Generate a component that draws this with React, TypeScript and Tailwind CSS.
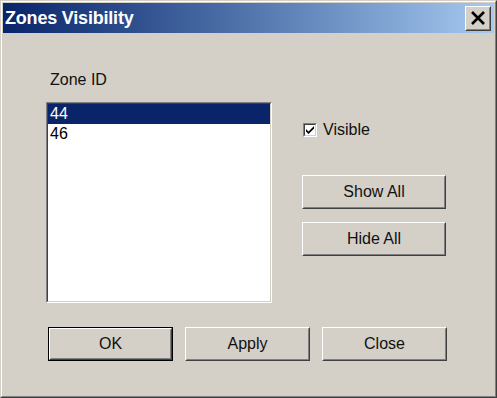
import React from "react";

const font = { fontFamily: '"Liberation Sans", Arial, sans-serif' };

function Button({ label, wide, isDefault }: { label: string; wide?: boolean; isDefault?: boolean }) {
  return (
    <div className={`${wide ? "w-[144px]" : "w-[125px]"} h-[34px] ${isDefault ? "border border-black" : ""}`}>
      <div className="w-full h-full border border-t-white border-l-white border-b-[#404040] border-r-[#404040]">
        <div className="w-full h-full flex items-center justify-center border border-t-[#d4d0c8] border-l-[#d4d0c8] border-b-[#808080] border-r-[#808080] text-[16px] text-[#111]">
          {label}
        </div>
      </div>
    </div>
  );
}

export default function App() {
  return (
    <div style={font} className="w-[497px] h-[398px] bg-[#d4d0c8] border border-t-[#d4d0c8] border-l-[#d4d0c8] border-b-[#404040] border-r-[#404040]">
      <div className="w-full h-full border border-t-white border-l-white border-b-[#808080] border-r-[#808080] p-px flex flex-col">
        {/* title bar */}
        <div className="h-[30px] flex items-center justify-between pl-[2px] pr-[3px] bg-gradient-to-r from-[#0a246a] to-[#a6caf0]">
          <span className="text-white font-bold text-[18px] tracking-[-0.2px]">Zones Visibility</span>
          <div className="w-[26px] h-[25px] border border-t-white border-l-white border-b-[#404040] border-r-[#404040] bg-[#d4d0c8]">
            <div className="w-full h-full flex items-center justify-center border border-t-[#d4d0c8] border-l-[#d4d0c8] border-b-[#808080] border-r-[#808080]">
              <svg width="16" height="14" viewBox="0 0 16 14">
                <path d="M2 1 L14 13 M14 1 L2 13" stroke="black" strokeWidth="2.6" />
              </svg>
            </div>
          </div>
        </div>

        {/* body */}
        <div className="flex-1 pl-[43px] pt-[38px]">
          <div className="flex">
            <div className="flex flex-col">
              <span className="text-[16px] text-[#111] leading-[18px] pl-[4px]">Zone ID</span>
              <div className="mt-[13px] w-[226px] h-[201px] border border-t-[#808080] border-l-[#808080] border-b-white border-r-white">
                <div className="w-full h-full bg-white border border-t-[#404040] border-l-[#404040] border-b-[#d4d0c8] border-r-[#d4d0c8] text-[16px]">
                  <div className="h-[20px] bg-[#0a246a] text-white pl-[2px] leading-[20px]">44</div>
                  <div className="h-[20px] text-black pl-[2px] leading-[20px]">46</div>
                </div>
              </div>
            </div>
            <div className="ml-[30px] pt-[47px] flex flex-col">
              <div className="flex items-center gap-[6px] pl-px">
                <div className="w-[14px] h-[14px] border border-t-[#808080] border-l-[#808080] border-b-white border-r-white">
                  <div className="w-full h-full bg-white border border-t-[#404040] border-l-[#404040] border-b-[#d4d0c8] border-r-[#d4d0c8] flex items-center justify-center">
                    <svg width="8" height="8" viewBox="0 0 8 8">
                      <path d="M0 3 L0 5.5 L2.5 8 L8 2.5 L8 0 L2.5 5.5 Z" fill="black" />
                    </svg>
                  </div>
                </div>
                <span className="text-[16px] text-[#111]">Visible</span>
              </div>
              <div className="mt-[33px]">
                <Button label="Show All" wide />
              </div>
              <div className="mt-[13px]">
                <Button label="Hide All" wide />
              </div>
            </div>
          </div>
          <div className="flex gap-[12px] mt-[24px] pl-[2px]">
            <Button label="OK" isDefault />
            <Button label="Apply" />
            <Button label="Close" />
          </div>
        </div>
      </div>
    </div>
  );
}
